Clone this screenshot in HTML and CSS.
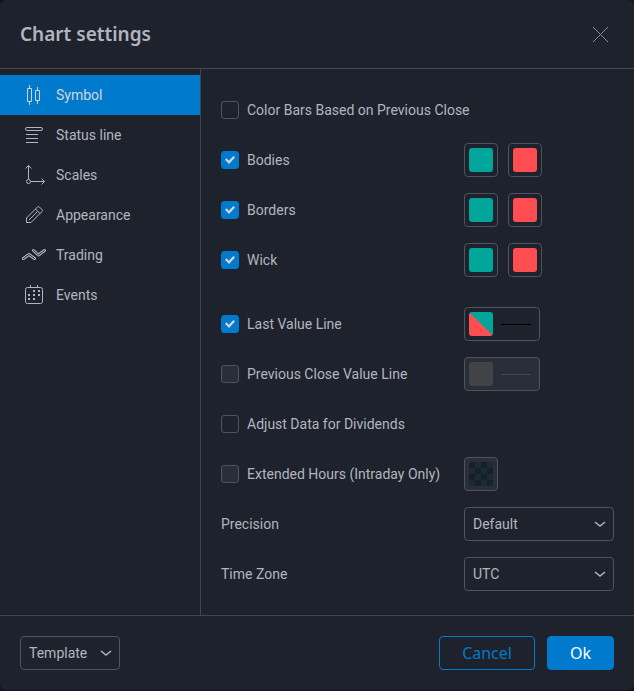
FILE: index.html
```html
<!DOCTYPE html>
<html lang="en">
<head>
<meta charset="utf-8">
<title>Chart settings</title>
<link rel="stylesheet" href="styles.css">
</head>
<body>
<main class="dialog">
  <header class="header">
    <h1 class="title">Chart settings</h1>
    <button class="close" type="button" aria-label="Close"><svg width="17" height="17" viewBox="0 0 17 17"><path d="M1 1l15 15M16 1L1 16"/></svg></button>
  </header>
  <div class="body">
    <nav class="tabs">
      <a class="tab active" href="#symbol"><svg class="icon" viewBox="0 0 28 28"><path d="M7.500 7.500h4v13h-4zM9.500 4v3M9.500 21v3M15.500 9.500h4v10h-4zM17.500 6v3M17.500 20v3"/></svg>Symbol</a>
      <a class="tab" href="#status"><svg class="icon" viewBox="0 0 28 28"><rect x="5.500" y="6.500" width="17" height="3" rx="1.500"/><path d="M6 13.500h12M6 17.500h12M6 21.500h12"/></svg>Status line</a>
      <a class="tab" href="#scales"><svg class="icon" viewBox="0 0 28 28"><circle cx="8.500" cy="20.500" r="2"/><path d="M8.500 18V4.500M5.500 7.500l3-3 3 3M11 20.500h13.500M21.500 17.500l3 3-3 3"/></svg>Scales</a>
      <a class="tab" href="#appearance"><svg class="icon" viewBox="0 0 28 28"><path d="M6.500 21.500v-4.500L17.600 5.900a1.200 1.200 0 0 1 1.700 0l2.800 2.800a1.200 1.200 0 0 1 0 1.700L11 21.500zM15.500 8l4.500 4.500M9 19l8.500-8.500"/></svg>Appearance</a>
      <a class="tab" href="#trading"><svg class="icon" viewBox="0 0 28 28"><g class="band"><path d="M3.500 17.500l5.500-4 5.500 4M13.500 9.500l5 4.500 6-4.500"/></g><g class="band-core"><path d="M3.500 17.500l5.500-4 5.500 4M13.500 9.500l5 4.500 6-4.500"/></g></svg>Trading</a>
      <a class="tab" href="#events"><svg class="icon" viewBox="0 0 28 28"><rect x="5.500" y="6.500" width="17" height="16" rx="2"/><path d="M10.500 4v3M17.500 4v3"/><path class="dots" d="M13 9h2v2h-2zM18 9h2v2h-2zM8 13h2v2H8zM13 13h2v2h-2zM18 13h2v2h-2zM8 17h2v2H8zM13 17h2v2h-2z"/></svg>Events</a>
    </nav>
    <form class="settings" id="settings">
      <div class="row"><label class="check wide"><input type="checkbox">Color Bars Based on Previous Close</label></div>
      <div class="row"><label class="check"><input type="checkbox" checked>Bodies</label>
        <div class="controls"><button class="swatch" type="button" aria-label="Bodies up color"><span class="chip up"></span></button><button class="swatch" type="button" aria-label="Bodies down color"><span class="chip down"></span></button></div></div>
      <div class="row"><label class="check"><input type="checkbox" checked>Borders</label>
        <div class="controls"><button class="swatch" type="button" aria-label="Borders up color"><span class="chip up"></span></button><button class="swatch" type="button" aria-label="Borders down color"><span class="chip down"></span></button></div></div>
      <div class="row group-end"><label class="check"><input type="checkbox" checked>Wick</label>
        <div class="controls"><button class="swatch" type="button" aria-label="Wick up color"><span class="chip up"></span></button><button class="swatch" type="button" aria-label="Wick down color"><span class="chip down"></span></button></div></div>
      <div class="row"><label class="check"><input type="checkbox" checked>Last Value Line</label>
        <div class="controls"><button class="swatch" type="button" aria-label="Last value line style"><span class="chip split"></span><span class="line"></span></button></div></div>
      <div class="row"><label class="check"><input type="checkbox" disabled>Previous Close Value Line</label>
        <div class="controls"><button class="swatch" type="button" disabled aria-label="Previous close line style"><span class="chip muted"></span><span class="line"></span></button></div></div>
      <div class="row"><label class="check wide"><input type="checkbox">Adjust Data for Dividends</label></div>
      <div class="row"><label class="check"><input type="checkbox" disabled>Extended Hours (Intraday Only)</label>
        <div class="controls"><button class="swatch" type="button" disabled aria-label="Extended hours color"><span class="chip clear"></span></button></div></div>
      <div class="row"><label for="precision">Precision</label>
        <div class="select"><select id="precision"><option>Default</option></select><svg class="chevron" viewBox="0 0 12 6"><path d="M1 1l5 4 5-4"/></svg></div></div>
      <div class="row"><label for="timezone">Time Zone</label>
        <div class="select"><select id="timezone"><option>UTC</option></select><svg class="chevron" viewBox="0 0 12 6"><path d="M1 1l5 4 5-4"/></svg></div></div>
    </form>
  </div>
  <footer class="footer">
    <button class="template" type="button">Template<svg class="chevron" viewBox="0 0 12 6"><path d="M1 1l5 4 5-4"/></svg></button>
    <div class="actions">
      <button class="action cancel" type="button">Cancel</button>
      <button class="action ok" type="submit" form="settings">Ok</button>
    </div>
  </footer>
</main>
</body>
</html>
```

FILE: styles.css
```css
* { box-sizing: border-box; }
body {
  margin: 0;
  background: #131620;
  color: #b2b5be;
  font: 14px/20px Roboto, sans-serif;
}
button, select { font: inherit; color: inherit; }
button { cursor: pointer; }
svg { fill: none; stroke: currentColor; flex: none; }
.dialog {
  display: flex;
  flex-direction: column;
  background: #1e222d;
  border-radius: 6px;
}
.header {
  display: flex;
  align-items: center;
  justify-content: space-between;
  padding: 20px 24px 20px 20px;
  border-bottom: 1px solid #434651;
}
.title { margin: 0; font: 600 19px/28px "Noto Sans", sans-serif; }
.close { display: flex; padding: 1px; border: 0; background: none; color: #868993; }
.body { display: flex; }
.tabs {
  flex: none;
  width: 201px;
  padding-top: 6px;
  border-right: 1px solid #434651;
}
.tab {
  display: flex;
  align-items: center;
  gap: 8px;
  height: 40px;
  padding: 0 20px;
  color: inherit;
  text-decoration: none;
}
.tab.active { background: #007acc; color: #d1d4dc; }
.icon { width: 28px; height: 28px; }
.band { stroke-width: 3; stroke-linecap: round; stroke-linejoin: round; }
.band-core { stroke: #1e222d; stroke-width: 1; stroke-linecap: round; stroke-linejoin: round; }
.dots { fill: currentColor; stroke: none; }
.settings { flex: 1; padding: 16px 20px; }
.row {
  display: grid;
  grid-template-columns: 243px 1fr;
  align-items: center;
  height: 50px;
}
.group-end { margin-bottom: 14px; }
.check { display: flex; align-items: center; gap: 8px; white-space: nowrap; }
.wide { grid-column: 1 / -1; }
.check input {
  appearance: none;
  flex: none;
  width: 18px;
  height: 18px;
  margin: 0;
  border: 1px solid #50535e;
  border-radius: 3px;
}
.check input:disabled { background: #2a2e39; }
.check input:checked {
  display: grid;
  place-items: center;
  border-color: #007acc;
  background: #007acc;
}
.check input:checked::before {
  content: "";
  width: 10px;
  height: 8px;
  background: #d1d4dc;
  clip-path: polygon(0 48%, 16% 28%, 38% 58%, 84% 0, 100% 18%, 40% 100%);
}
.controls { display: flex; gap: 10px; }
.swatch {
  display: flex;
  align-items: center;
  gap: 8px;
  height: 34px;
  padding: 0 4px;
  border: 1px solid #50535e;
  border-radius: 4px;
  background: none;
}
.swatch:disabled { background: #2a2e39; }
.chip { width: 24px; height: 24px; border-radius: 3px; }
.up { background: #00a69a; }
.down { background: #ff4d52; }
.split { background: linear-gradient(45deg, #ff4d52 50%, #00a69a 50%); }
.muted { background: #424346; }
.clear { background: repeating-conic-gradient(#1d2a33 0 25%, #15202a 0 50%) 0 0 / 12px 12px; }
.line { width: 30px; height: 1px; margin-right: 4px; background: #000; }
.swatch:disabled .line { background: #434651; }
.select { display: grid; align-items: center; }
.select > * { grid-area: 1 / 1; }
.select select {
  appearance: none;
  width: 100%;
  height: 34px;
  padding: 0 28px 0 8px;
  border: 1px solid #50535e;
  border-radius: 4px;
  background: none;
}
.chevron { width: 12px; height: 6px; stroke-width: 1.5; }
.select .chevron { justify-self: end; margin-right: 8px; pointer-events: none; }
.footer {
  display: flex;
  align-items: center;
  justify-content: space-between;
  padding: 20px;
  border-top: 1px solid #434651;
}
.template {
  display: flex;
  align-items: center;
  justify-content: space-between;
  width: 100px;
  height: 34px;
  padding: 0 7px 0 8px;
  border: 1px solid #50535e;
  border-radius: 4px;
  background: none;
}
.actions { display: flex; gap: 12px; }
.action {
  height: 34px;
  padding: 0 22px;
  border: 1px solid #007acc;
  border-radius: 4px;
  font-family: "Noto Sans", sans-serif;
  font-size: 16px;
}
.cancel { background: none; color: #007acc; }
.ok { background: #007acc; color: #fff; }
```
